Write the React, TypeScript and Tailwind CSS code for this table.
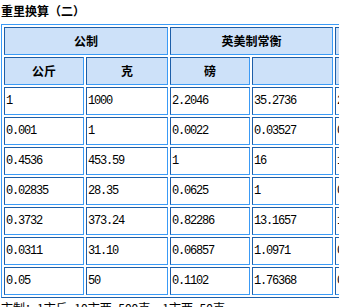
const rows = [
  ['1', '1000', '2.2046', '35.2736', '2.6792', '32.1507'],
  ['0.001', '1', '0.0022', '0.03527', '0.00268', '0.03215'],
  ['0.4536', '453.59', '1', '16', '1.2153', '14.5833'],
  ['0.02835', '28.35', '0.0625', '1', '0.07596', '0.9115'],
  ['0.3732', '373.24', '0.82286', '13.1657', '1', '12'],
  ['0.0311', '31.10', '0.06857', '1.0971', '0.08333', '1'],
  ['0.05', '50', '0.1102', '1.76368', '0.1340', '1.6075'],
];

const widths = ['w-[80px]', 'w-[82px]', 'w-[80px]', 'w-[81px]', 'w-[81px]', 'w-[81px]'];

const cell =
  'h-[28px] p-0 border border-t-[#1d5ea8] border-l-[#1d5ea8] border-b-[#3a9af6] border-r-[#3a9af6]';
const head = `${cell} bg-[#cde1f9] text-center font-bold text-[12px] text-black`;
const cjk = { fontFamily: '"Noto Sans CJK SC", "Noto Sans", sans-serif' };

export default function App() {
  return (
    <div className="w-[339px] h-[307px] overflow-hidden bg-white text-black" style={cjk}>
      <div className="h-[24px] pl-[1px] pt-[3px] text-[12px] leading-[16px] font-bold">重里换算（二）</div>

      <table className="w-[501px] min-w-[501px] table-fixed ml-[1px] border-separate border-spacing-[2px] border border-t-[#3a9af6] border-l-[#3a9af6] border-b-[#1d5ea8] border-r-[#1d5ea8]">
        <colgroup>
          {widths.map((w, i) => (
            <col key={i} className={w} />
          ))}
        </colgroup>
        <tbody>
          <tr>
            <td colSpan={2} className={head}>公制</td>
            <td colSpan={2} className={head}>英美制常衡</td>
            <td colSpan={2} className={head}>英美制金衡</td>
          </tr>
          <tr>
            <td className={head}>公斤</td>
            <td className={head}>克</td>
            <td className={head}>磅</td>
            <td className={head}></td>
            <td className={head}>磅</td>
            <td className={head}>盎司</td>
          </tr>
          {rows.map((r, i) => (
            <tr key={i}>
              {r.map((v, j) => (
                <td
                  key={j}
                  className={`${cell} pl-[1px] text-left text-[12px] tracking-[-1.2px] whitespace-nowrap`}
                  style={{ fontFamily: '"Liberation Mono", monospace' }}
                >
                  {v}
                </td>
              ))}
            </tr>
          ))}
        </tbody>
      </table>

      <div className="w-[501px] pl-[1px] pt-[2px] text-[12px] leading-[16px] whitespace-nowrap">市制：1市斤=10市两=500克，1市两=50克</div>
    </div>
  );
}
